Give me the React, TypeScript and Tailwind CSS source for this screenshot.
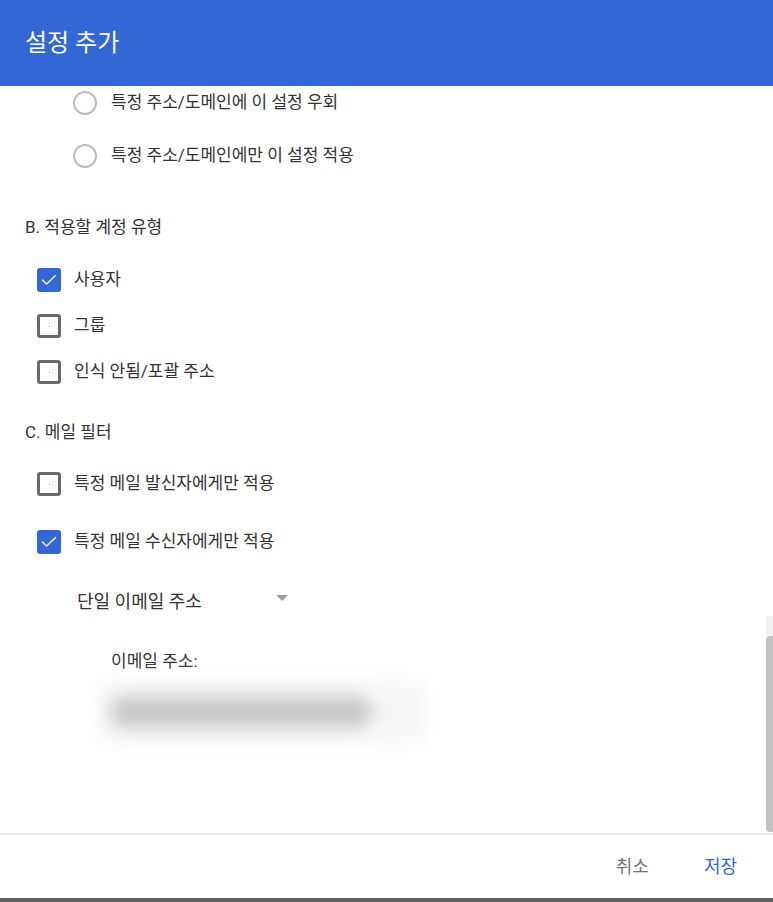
import React from "react";

const font = { fontFamily: 'Roboto, "Noto Sans CJK KR", "Noto Sans", sans-serif' };

function Radio({ label, className = "" }: { label: string; className?: string }) {
  return (
    <div className={"flex h-[30px] items-center pl-[73px] " + className}>
      <span className="box-border h-[24px] w-[24px] rounded-full border-2 border-[#bdbdbd]" />
      <span className="ml-[14px] text-[17px] text-[#333]">{label}</span>
    </div>
  );
}

function Check({ label, checked, className = "" }: { label: string; checked?: boolean; className?: string }) {
  return (
    <div className={"flex h-[24px] items-center pl-[37px] " + className}>
      {checked ? (
        <span className="flex h-[24px] w-[24px] items-center justify-center rounded-[3px] bg-[#3367d6]">
          <svg width="16" height="12" viewBox="0 0 16 12" fill="none">
            <path d="M1.5 6.2 L5.6 10 L14.5 1.5" stroke="#e8eefc" strokeWidth="1.6" strokeLinecap="round" strokeLinejoin="round" />
          </svg>
        </span>
      ) : (
        <span className="relative box-border flex h-[24px] w-[24px] items-center justify-center rounded-[3px] border-[3px] border-[#6a6a6a]">
          <span className="h-[1px] w-[1px] bg-[#999]" />
        </span>
      )}
      <span className="ml-[13px] text-[17px] text-[#333]">{label}</span>
    </div>
  );
}

export default function App() {
  return (
    <div className="flex h-[902px] w-[773px] flex-col overflow-hidden bg-white" style={font}>
      <div className="flex h-[86px] shrink-0 items-center bg-[#3367d6] pl-[25px]">
        <span className="text-[24px] text-white">설정 추가</span>
      </div>
      <div className="relative flex-1">
        <div className="flex flex-col pt-[2px]">
          <Radio label="특정 주소/도메인에 이 설정 우회" />
          <Radio label="특정 주소/도메인에만 이 설정 적용" className="mt-[23px]" />
          <div className="mt-[45px] flex h-[24px] items-center pl-[25px] text-[17px] text-[#333]">B. 적용할 계정 유형</div>
          <Check label="사용자" checked className="mt-[28px]" />
          <Check label="그룹" className="mt-[22px]" />
          <Check label="인식 안됨/포괄 주소" className="mt-[22px]" />
          <div className="mt-[37px] flex h-[24px] items-center pl-[25px] text-[17px] text-[#333]">C. 메일 필터</div>
          <Check label="특정 메일 발신자에게만 적용" className="mt-[27px]" />
          <Check label="특정 메일 수신자에게만 적용" checked className="mt-[34px]" />
          <div className="mt-[35px] flex h-[24px] items-center pl-[77px]">
            <span className="text-[18px] text-[#333]">단일 이메일 주소</span>
            <svg className="ml-[74px] -mt-[6px]" width="12" height="6" viewBox="0 0 12 6">
              <path d="M0 0 L12 0 L6 6 Z" fill="#9e9e9e" />
            </svg>
          </div>
          <div className="mt-[37px] flex h-[24px] items-center pl-[111px] text-[17px] text-[#333]">이메일 주소:</div>
          <div className="relative ml-[100px] mt-[8px] h-[60px] w-[325px]">
            <div className="absolute inset-0 bg-[#f6f6f6] blur-[10px]" />
            <div className="absolute left-[10px] top-[15px] h-[30px] w-[262px] rounded-full bg-[#c6c6c6] blur-[9px]" />
          </div>
        </div>
        <div className="absolute right-0 top-[530px] h-[20px] w-[7px] bg-[#f0f0f0]" />
        <div className="absolute right-0 top-[550px] h-[196px] w-[7px] rounded-l-[4px] bg-[#c1c1c1]" />
      </div>
      <div className="h-[2px] shrink-0 bg-[#e8e8e8]" />
      <div className="flex h-[63px] shrink-0 items-center justify-end pr-[36px] text-[18px]">
        <span className="text-[#757575]">취소</span>
        <span className="ml-[55px] text-[#3367d6]">저장</span>
      </div>
      <div className="h-[4px] shrink-0 bg-[#616161]" />
    </div>
  );
}
